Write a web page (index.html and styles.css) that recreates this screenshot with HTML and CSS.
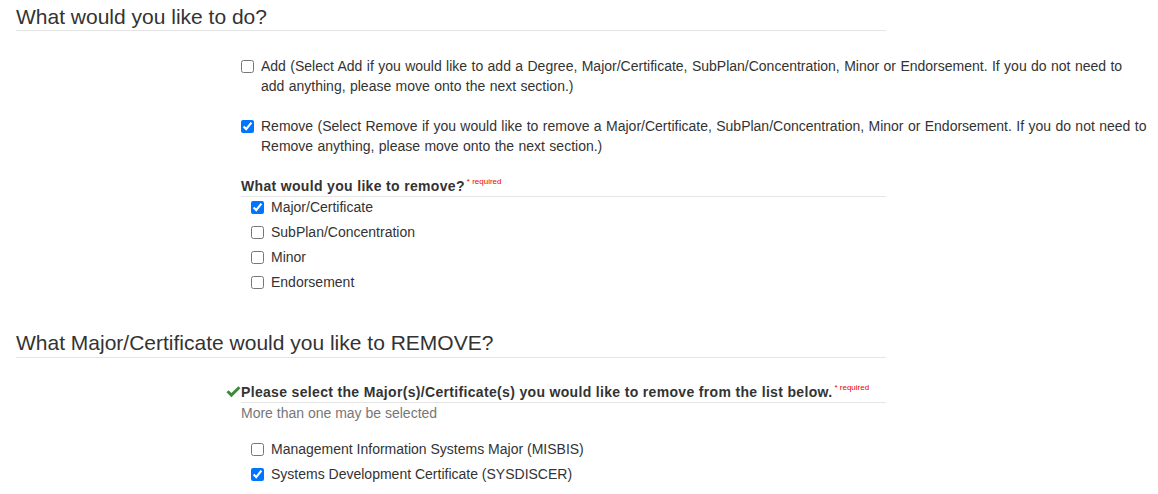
FILE: index.html
```html
<!DOCTYPE html>
<html lang="en">
<head>
<meta charset="utf-8">
<title>Form</title>
<link rel="stylesheet" href="styles.css">
</head>
<body>
<div class="page">
  <h2 class="section-title">What would you like to do?</h2>
  <div class="group group-first">
    <label class="option">
      <input type="checkbox" class="cb">
      <span class="option-text">Add (Select Add if you would like to add a Degree, Major/Certificate, SubPlan/Concentration, Minor or Endorsement. If you do not need to add anything, please move onto the next section.)</span>
    </label>
    <label class="option option-spaced">
      <input type="checkbox" class="cb" checked>
      <span class="option-text">Remove (Select Remove if you would like to remove a Major/Certificate, SubPlan/Concentration, Minor or Endorsement. If you do not need to Remove anything, please move onto the next section.)</span>
    </label>
    <div class="question question-spaced">What would you like to remove?<sup class="req">* required</sup></div>
    <ul class="items">
      <li><label class="item"><input type="checkbox" class="cb" checked><span>Major/Certificate</span></label></li>
      <li><label class="item"><input type="checkbox" class="cb"><span>SubPlan/Concentration</span></label></li>
      <li><label class="item"><input type="checkbox" class="cb"><span>Minor</span></label></li>
      <li><label class="item"><input type="checkbox" class="cb"><span>Endorsement</span></label></li>
    </ul>
  </div>

  <h2 class="section-title section-second">What Major/Certificate would you like to REMOVE?</h2>
  <div class="group group-second">
    <div class="question"><svg class="ok" width="15" height="12" viewBox="0 0 15 12" aria-hidden="true"><path d="M0.5 6.3 L2.6 4.3 L5.4 7.1 L12.4 0.3 L14.5 2.3 L5.4 11.3 Z" fill="#3f8a3a"/></svg>Please select the Major(s)/Certificate(s) you would like to remove from the list below.<sup class="req">* required</sup></div>
    <div class="hint">More than one may be selected</div>
    <ul class="items items-second">
      <li><label class="item"><input type="checkbox" class="cb"><span>Management Information Systems Major (MISBIS)</span></label></li>
      <li><label class="item"><input type="checkbox" class="cb" checked><span>Systems Development Certificate (SYSDISCER)</span></label></li>
    </ul>
  </div>
</div>
</body>
</html>
```

FILE: styles.css
```css
* { box-sizing: border-box; }
html, body { margin: 0; padding: 0; background: #fff; }
body {
  font-family: "Liberation Sans", Arial, sans-serif;
  font-size: 14px;
  line-height: 20px;
  color: #333;
}
.page { padding: 0 16px; }
.section-title {
  margin: 0;
  width: 870px;
  padding: 5px 0 1px;
  font-size: 21px;
  line-height: 24px;
  font-weight: normal;
  color: #333;
  border-bottom: 1px solid #e5e5e5;
}
.section-second { margin-top: 34px; padding-bottom: 2px; }
.group { margin-left: 225px; width: 907px; }
.group-first { padding-top: 25px; }
.group-second { padding-top: 24px; }
.option { display: flex; align-items: flex-start; cursor: pointer; }
.option-text { word-spacing: 0.5px; }
.option-spaced { margin-top: 20px; }
.cb {
  flex: none;
  width: 13px;
  height: 13px;
  margin: 4px 7px 0 0;
}
.question {
  width: 645px;
  font-weight: bold;
  font-size: 14px;
  line-height: 20px;
  letter-spacing: 0.33px;
  color: #333;
  border-bottom: 1px solid #e5e5e5;
}
.question-spaced { margin-top: 20px; }
.req {
  font-weight: normal;
  font-size: 8px;
  line-height: 0;
  letter-spacing: 0;
  color: #e00;
  vertical-align: 7px;
  margin-left: 2px;
}
.ok {
  display: inline-block;
  margin-left: -15px;
  vertical-align: -1px;
}
.hint { color: #777; line-height: 20px; }
.items { list-style: none; margin: 0; padding: 0 0 0 10px; }
.items-second { margin-top: 16px; }
.items li { margin-bottom: 5px; }
.item { display: flex; align-items: flex-start; cursor: pointer; }
```
